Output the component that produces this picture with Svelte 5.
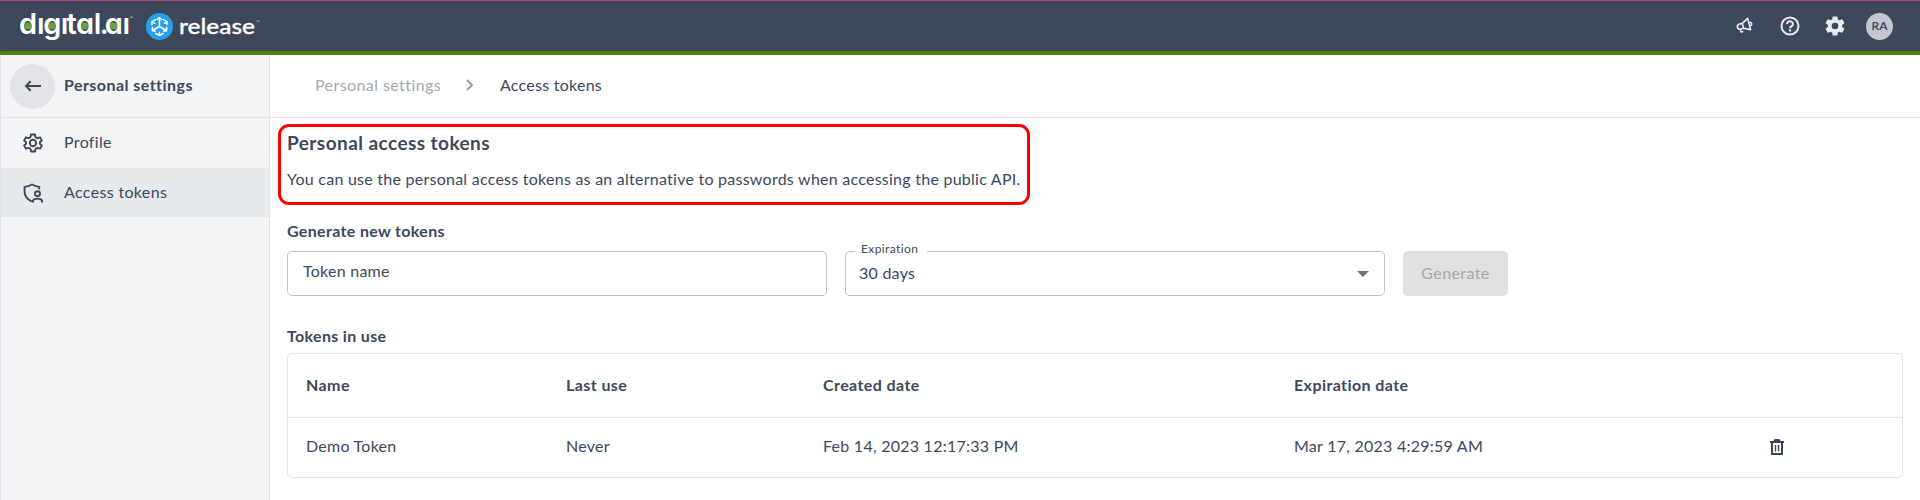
<script>
  const columns = ['Name', 'Last use', 'Created date', 'Expiration date', ''];
  const tokens = [
    { name: 'Demo Token', lastUse: 'Never', created: 'Feb 14, 2023 12:17:33 PM', expires: 'Mar 17, 2023 4:29:59 AM' }
  ];
</script>

<div class="page">
  <header>
    <svg class="logo" width="280" height="50" viewBox="0 1 280 50">
      <text class="brand" y="34" x="19 37 43.3 60.7 66.4 76 93.8 99.6 104.8 122.4">dıgıtal.aı</text>
      <g fill="#68a33e">
        <circle cx="28" cy="26" r="3.6" /><circle cx="52.2" cy="26" r="3.6" />
        <circle cx="84.6" cy="26" r="3.6" /><circle cx="113.5" cy="26" r="3.6" />
      </g>
      <text class="tm" x="129.5" y="20">™</text>
      <circle cx="159.5" cy="26.5" r="13.5" fill="#26a0ee" />
      <g fill="none" stroke="#fff" stroke-width="1.5" stroke-linecap="round" stroke-linejoin="round">
        <path d="M159.5 18v8.5l-6.8 4M159.5 26.5l6.8 4M157.3 19.5l2.2-2 2.2 2M152.4 27.5v3.2l2.8.6M166.6 27.5v3.2l-2.8.6M155.5 19.6l-3.5 2v3M163.5 19.6l3.5 2v3M155.8 33.4l3.7 2.1 3.7-2.1M152 21.8l2.6 1.5M167 21.8l-2.6 1.5M159.5 35.2v-3" />
      </g>
      <text class="product" x="179" y="33.5" textLength="76" lengthAdjust="spacingAndGlyphs">release</text>
      <text class="tm" x="256" y="24">™</text>
    </svg>
    <div class="actions">
      <svg width="18" height="18" viewBox="0 0 18 18" fill="none" stroke="#e9ebef" stroke-width="1.6" stroke-linejoin="round" stroke-linecap="round">
        <path d="M7.3 6.4 12.6 1.4 15.6 12.6 8.6 11.3M7.3 6.4 3.8 7.2a2.7 2.7 0 0 0 1.2 5.1l3.6-1zM7.3 6.4l1.3 4.9M5.4 12.6l.7 2.4 1.6-.3M15 5.3a1.7 1.7 0 0 1 .8 3.2" />
      </svg>
      <svg width="20" height="20" viewBox="0 0 20 20" fill="none" stroke="#e9ebef">
        <circle cx="10" cy="10" r="8.5" stroke-width="2" />
        <path d="M7.1 8a2.9 2.7 0 1 1 4.5 2.2c-.9.6-1.6 1-1.6 2" stroke-width="2" />
        <path d="M10 13.4v2" stroke-width="2.2" />
      </svg>
      <svg width="24" height="24" viewBox="0 0 24 24" fill="#e9ebef">
        <path d="M19.14 12.94c.04-.3.06-.61.06-.94 0-.32-.02-.64-.07-.94l2.03-1.58c.18-.14.23-.41.12-.61l-1.92-3.32c-.12-.22-.37-.29-.59-.22l-2.39.96c-.5-.38-1.03-.7-1.62-.94l-.36-2.54c-.04-.24-.24-.41-.48-.41h-3.84c-.24 0-.43.17-.47.41l-.36 2.54c-.59.24-1.13.57-1.62.94l-2.39-.96c-.22-.08-.47 0-.59.22L2.74 8.87c-.12.21-.08.47.12.61l2.03 1.58c-.05.3-.09.63-.09.94s.02.64.07.94l-2.03 1.58c-.18.14-.23.41-.12.61l1.92 3.32c.12.22.37.29.59.22l2.39-.96c.5.38 1.03.7 1.62.94l.36 2.54c.05.24.24.41.48.41h3.84c.24 0 .44-.17.47-.41l.36-2.54c.59-.24 1.13-.56 1.62-.94l2.39.96c.22.08.47 0 .59-.22l1.92-3.32c.12-.22.07-.47-.12-.61zM12 15.3a3.3 3.3 0 1 1 0-6.6 3.3 3.3 0 0 1 0 6.6z" />
      </svg>
      <span class="avatar">RA</span>
    </div>
  </header>

  <div class="body">
    <nav>
      <div class="nav-title">
        <span class="back">
          <svg width="18" height="12" viewBox="0 0 18 12" fill="none" stroke="#3d485c" stroke-width="2"><path d="M17 6H2M6.7 1.2 2 6l4.7 4.8" /></svg>
        </span>
        <span class="text">Personal settings</span>
      </div>
      <div class="nav-item">
        <svg width="24" height="24" viewBox="0 0 24 24" fill="none" stroke="#3d485c" stroke-width="1.9" stroke-linejoin="round">
          <path d="M10 3.5h4l.5 2.6 1.9 1.1 2.6-.9 1.9 3.3-2 1.7v1.4l2 1.7-1.9 3.3-2.6-.9-1.9 1.1-.5 2.6h-4l-.5-2.6-1.9-1.1-2.6.9-1.9-3.3 2-1.7v-1.4l-2-1.7L5 6.3l2.6.9 1.9-1.1z" />
          <circle cx="12" cy="12" r="3.2" />
        </svg>
        <span class="text">Profile</span>
      </div>
      <div class="nav-item active">
        <svg width="24" height="24" viewBox="0 0 24 24" fill="none" stroke="#3d485c" stroke-width="1.9">
          <path d="M10.8 20.6C6.2 18.2 3.6 15 3.6 10.8V5.9C7 5.7 9 4.7 11 3.5 13 4.7 15 5.7 18.2 5.9V8.5" />
          <circle cx="16.5" cy="12.8" r="2.5" />
          <path d="M11.9 21.4v-.8c0-2 1.6-2.7 3-2.7h3.4c1.5 0 2.8.8 2.8 2.7v.8" />
        </svg>
        <span class="text">Access tokens</span>
      </div>
    </nav>

    <main>
      <div class="crumbs">
        <span class="text parent">Personal settings</span>
        <svg width="8" height="12" viewBox="0 0 8 12" fill="none" stroke="#949ba6" stroke-width="1.9"><path d="M1 1l5 5-5 5" /></svg>
        <span class="text">Access tokens</span>
      </div>
      <div class="content">
        <section class="intro">
          <h1>Personal access tokens</h1>
          <p>You can use the personal access tokens as an alternative to passwords when accessing the public API.</p>
        </section>
        <h2 class="gen">Generate new tokens</h2>
        <div class="form">
          <div class="field name">Token name</div>
          <div class="field select">
            <span class="label">Expiration</span>
            <span class="text">30 days</span>
            <svg width="12" height="6" viewBox="0 0 12 6"><path d="M0 0h12L6 6z" fill="#757575" /></svg>
          </div>
          <div class="button">Generate</div>
        </div>
        <h2 class="use">Tokens in use</h2>
        <div class="table">
          <div class="row head">
            {#each columns as c}<span class="text">{c}</span>{/each}
          </div>
          {#each tokens as t}
            <div class="row">
              <span class="cell">{t.name}</span><span class="cell">{t.lastUse}</span><span class="cell">{t.created}</span><span class="cell">{t.expires}</span>
              <span class="trash">
                <svg width="16" height="18" viewBox="0 0 16 18">
                  <path d="M1 4h14M3 4.5v11.500h10V4.5" fill="none" stroke="#3d485c" stroke-width="2" />
                  <path d="M4.3 3.5C4.3 1.8 5.5 1 6.5 1h3c1 0 2.200.8 2.200 2.500z" fill="#3d485c" />
                  <path d="M6.5 7v6.5M9.5 7v6.5" stroke="#3d485c" stroke-width="1.4" />
                </svg>
              </span>
            </div>
          {/each}
        </div>
      </div>
    </main>
  </div>
</div>

<style>
  :global(body) { margin: 0; background: #fff; }
  .page { height: 500px; display: flex; flex-direction: column; overflow: hidden; font: 16px/20px Lato, sans-serif; letter-spacing: 0.25px; color: #3d485c; }
  .page :global(*) { box-sizing: border-box; }
  header { height: 55px; flex: none; background: #3d485c; border-top: 1px solid #b3477d; border-bottom: 4px solid #498200; display: flex; justify-content: space-between; }
  svg { flex: none; display: block; }
  .brand { font: 600 29px Inter, sans-serif; font-feature-settings: 'cv11'; letter-spacing: 0; fill: #fff; }
  .product { font: 500 22px Lato, sans-serif; letter-spacing: 0; fill: #fff; stroke: #fff; stroke-width: 0.3px; }
  .tm { font: 5px Lato, sans-serif; letter-spacing: 0; fill: #c5c9d0; }
  .actions { display: flex; align-items: center; padding-right: 27px; }
  .actions svg:nth-child(1) { margin-right: 27px; }
  .actions svg:nth-child(2) { margin-right: 23px; }
  .actions svg:nth-child(3) { margin-right: 19px; }
  .avatar { width: 27px; height: 27px; margin-top: 1px; border-radius: 50%; background: #c2c6cd; font-size: 12px; line-height: 26px; text-align: center; letter-spacing: 0.2px; font-weight: 500; -webkit-text-stroke: 0.2px #3d485c; }
  .text { padding-bottom: 2px; }
  .cell { padding-bottom: 3px; }
  .body { flex: 1; display: flex; }
  nav { width: 270px; flex: none; background: #f3f5f7; border: solid #e1e3e6; border-width: 0 1px; letter-spacing: 0.34px; }
  .nav-title { height: 63px; border-bottom: 1px solid #e1e3e6; display: flex; align-items: center; padding-left: 9px; gap: 9px; font-weight: 700; letter-spacing: 0.45px; }
  .back { width: 45px; height: 45px; border-radius: 50%; background: #e2e4e8; display: flex; align-items: center; justify-content: center; }
  .nav-item { height: 50px; display: flex; align-items: center; gap: 19px; padding-left: 20px; }
  .nav-item.active { height: 49px; background: #e4eaee; }
  main { flex: 1; }
  .crumbs { height: 63px; border-bottom: 1px solid #e1e3e6; display: flex; align-items: center; padding-left: 45px; letter-spacing: 0.25px; }
  .crumbs .parent { color: #a3a9b2; width: 126px; white-space: nowrap; letter-spacing: 0.42px; }
  .crumbs svg { margin: 0 26px 0 25px; position: relative; top: -1px; }
  .content { padding: 6px 17px 0 8px; }
  .intro { width: 752px; height: 81px; border: 3px solid #f00; border-radius: 11px; padding: 5px 6px 0; }
  h1 { margin: 0; font: 700 19px/22px Lato, sans-serif; letter-spacing: 0.44px; }
  p { margin: 15px 0 0; white-space: nowrap; }
  h2 { margin: 0 0 0 9px; font: 700 16px/20px Lato, sans-serif; letter-spacing: 0.34px; }
  .gen { padding-top: 16px; }
  .form { display: flex; margin: 10px 0 0 9px; }
  .field { width: 540px; height: 45px; border: 1px solid #c1c1c1; border-radius: 5px; display: flex; align-items: center; position: relative; }
  .name { padding: 0 0 5px 15px; }
  .select { margin: 0 18px; padding: 0 15px 0 13px; justify-content: space-between; }
  .label { position: absolute; left: 9px; top: -11px; padding: 0 9px 0 6px; background: #fff; font-size: 12px; line-height: 16px; letter-spacing: 0.4px; }
  .button { width: 105px; height: 45px; line-height: 43px; border-radius: 5px; background: #e0e0e0; color: #a6a6a6; text-align: center; letter-spacing: 0.4px; }
  .use { margin-top: 30px; }
  .table { margin: 7px 0 0 9px; border: 1px solid #e2e4e6; border-radius: 5px; }
  .row { display: grid; grid-template-columns: 260px 257px 471px 471px 1fr; height: 59px; align-items: center; padding-left: 18px; }
  .head { height: 64px; border-bottom: 1px solid #e2e4e6; font-weight: 700; letter-spacing: 0.42px; }
  .trash { padding: 0 0 2px 4px; }
</style>
